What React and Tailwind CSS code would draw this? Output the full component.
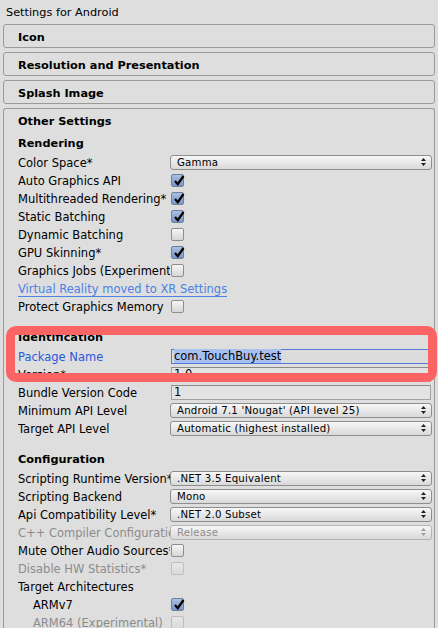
import React from 'react';

function Check({ checked, disabled }) {
  return (
    <div
      className={
        'relative ml-[1px] h-[13px] w-[13px] rounded-[2px] border ' +
        (checked
          ? 'border-[#6f819c] bg-gradient-to-b from-[#aabfe2] to-[#7a95c6]'
          : 'border-[#8f8f8f] bg-gradient-to-b from-[#f6f6f6] to-[#d6d6d6]') +
        (disabled ? ' opacity-40' : '')
      }
    >
      {checked && (
        <svg className="absolute left-[1px] top-[-1px]" width="12" height="13" viewBox="0 0 12 13">
          <path d="M2 7 L4.8 10.2 L10.5 2" fill="none" stroke="#000" strokeWidth="2.2" />
        </svg>
      )}
    </div>
  );
}

function Popup({ value, disabled }) {
  return (
    <div
      className={
        'flex h-[15px] flex-1 items-center justify-between rounded-[3px] border border-[#8e8e8e] bg-gradient-to-b from-[#f7f7f7] to-[#d9d9d9] pl-[6px] pr-[5px] text-[10.2px] tracking-[0.2px] ' +
        (disabled ? 'border-[#b4b4b4] text-[#8f8f8f]' : 'text-black')
      }
    >
      <span className="pt-[2px] leading-none">{value}</span>
      <svg width="5" height="8" viewBox="0 0 5 8">
        <path d="M2.5 0 L5 3 L0 3 Z M0 5 L5 5 L2.5 8 Z" fill={disabled ? '#a0a0a0' : '#222'} />
      </svg>
    </div>
  );
}

function Field({ value, active }) {
  return (
    <div
      className={
        'ml-[1px] mr-[1px] flex h-[15px] flex-1 items-center border pl-[2px] text-[11.5px] ' +
        (active ? 'border-[#5477dc] bg-[#dcdcdc]' : 'border-[#a3a3a3] border-t-[#8a8a8a] bg-[#e3e3e3]')
      }
    >
      <span className={'pt-[1px] leading-[13px] ' + (active ? 'bg-[#a7c0f0]' : '')}>{value}</span>
    </div>
  );
}

function Row({ label, children, indent, disabled, blue }) {
  return (
    <div className="flex h-[18px] items-center">
      <div
        className={
          'w-[152px] shrink-0 overflow-hidden whitespace-nowrap pt-[4px] text-[11.5px] ' +
          (indent ? 'pl-[15px] ' : '') +
          (disabled ? 'text-[#8c8c8c]' : blue ? 'text-[#2a58dc]' : 'text-black')
        }
      >
        {label}
      </div>
      {children}
    </div>
  );
}

function Heading({ children, top }) {
  return (
    <div className={'mb-[2px] flex h-[18px] items-center pt-[4px] text-[11.3px] font-bold ' + top}>{children}</div>
  );
}

function Foldout({ title }) {
  return (
    <div className="mb-[4px] ml-[3px] flex h-[24px] w-[432px] items-center rounded-[3px] border border-[#9a9a9a] pl-[14px] pt-[4px] text-[11.3px] font-bold">
      {title}
    </div>
  );
}

export default function App() {
  return (
    <div className="relative h-[628px] w-[438px] overflow-hidden bg-[#dedede] font-['DejaVu_Sans',sans-serif] text-black">
      <div className="flex h-[24px] items-center pl-[6px] pt-[3px] text-[11.3px]">Settings for Android</div>

      <Foldout title="Icon" />
      <Foldout title="Resolution and Presentation" />
      <Foldout title="Splash Image" />

      {/* Other Settings */}
      <div className="ml-[3px] h-[600px] w-[432px] rounded-t-[3px] border border-b-0 border-[#9a9a9a] pl-[14px] pr-[2px]">
        <div className="flex h-[22px] items-center pt-[4px] text-[11.3px] font-bold">Other Settings</div>

        <Heading top="mt-[2px]">Rendering</Heading>
        <Row label="Color Space*">
          <Popup value="Gamma" />
        </Row>
        <Row label="Auto Graphics API">
          <Check checked />
        </Row>
        <Row label="Multithreaded Rendering*">
          <Check checked />
        </Row>
        <Row label="Static Batching">
          <Check checked />
        </Row>
        <Row label="Dynamic Batching">
          <Check />
        </Row>
        <Row label="GPU Skinning*">
          <Check checked />
        </Row>
        <Row label="Graphics Jobs (Experimental)">
          <Check />
        </Row>
        <div className="flex h-[18px] items-center pt-[4px]">
          <span className="border-b border-[#4a82e6] text-[11.5px] leading-[13px] text-[#4a82e6]">
            Virtual Reality moved to XR Settings
          </span>
        </div>
        <Row label="Protect Graphics Memory">
          <Check />
        </Row>

        <Heading top="mt-[12px]">Identification</Heading>
        <Row label="Package Name" blue>
          <Field value="com.TouchBuy.test" active />
        </Row>
        <Row label="Version*">
          <Field value="1.0" />
        </Row>
        <Row label="Bundle Version Code">
          <Field value="1" />
        </Row>
        <Row label="Minimum API Level">
          <Popup value="Android 7.1 'Nougat' (API level 25)" />
        </Row>
        <Row label="Target API Level">
          <Popup value="Automatic (highest installed)" />
        </Row>

        <Heading top="mt-[12px]">Configuration</Heading>
        <Row label="Scripting Runtime Version*">
          <Popup value=".NET 3.5 Equivalent" />
        </Row>
        <Row label="Scripting Backend">
          <Popup value="Mono" />
        </Row>
        <Row label="Api Compatibility Level*">
          <Popup value=".NET 2.0 Subset" />
        </Row>
        <Row label="C++ Compiler Configuration" disabled>
          <Popup value="Release" disabled />
        </Row>
        <Row label="Mute Other Audio Sources*">
          <Check />
        </Row>
        <Row label="Disable HW Statistics*" disabled>
          <Check disabled />
        </Row>
        <Row label="Target Architectures" />
        <Row label="ARMv7" indent>
          <Check checked />
        </Row>
        <Row label="ARM64 (Experimental)" indent disabled>
          <Check disabled />
        </Row>
      </div>

      {/* highlight annotation */}
      <div className="pointer-events-none absolute left-[6px] top-[326px] h-[56px] w-[431px] rounded-[10px] border-[9px] border-[#fb6464]" />
    </div>
  );
}
